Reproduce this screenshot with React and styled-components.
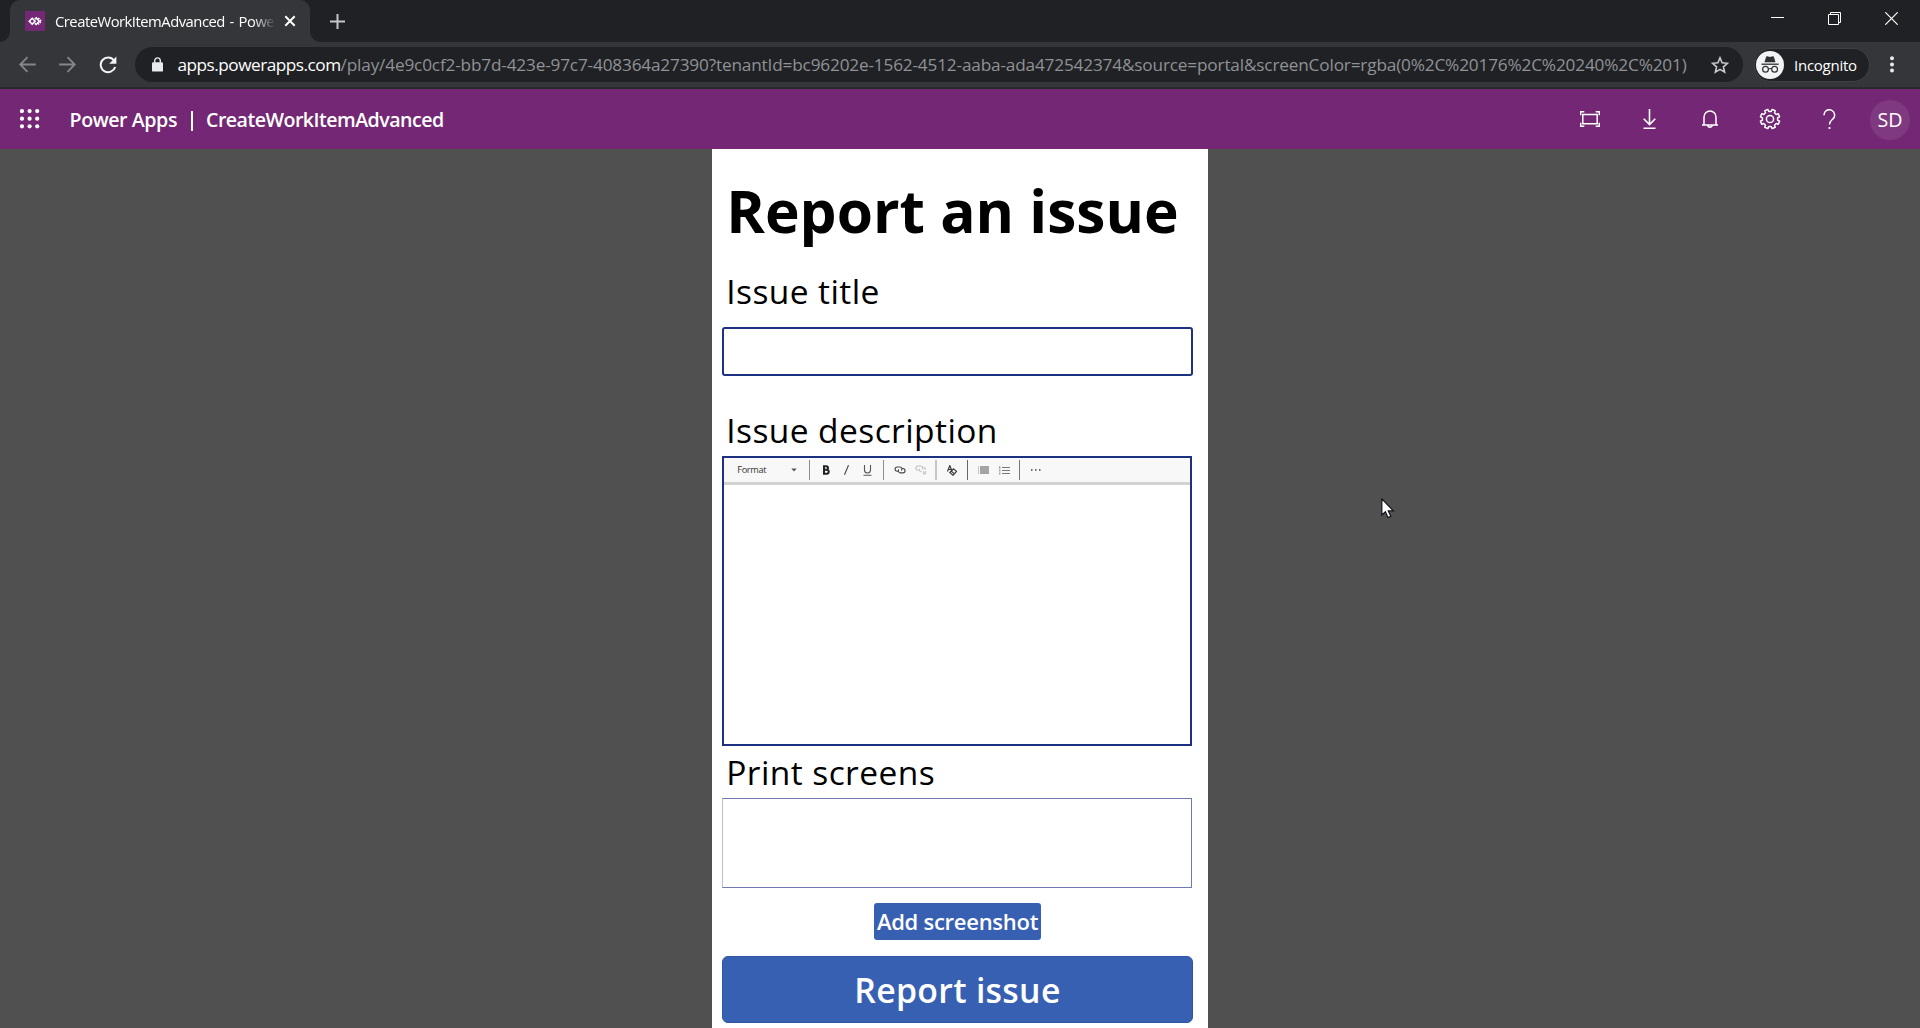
import React from "react";
import styled, { createGlobalStyle } from "styled-components";

const Global = createGlobalStyle`
  * { box-sizing: border-box; }
  html, body { margin: 0; padding: 0; background: #505050; overflow: hidden; }
  svg { display: block; flex: none; }
  button, input { font: inherit; }
`;

const UI_FONT = `"Open Sans", "Noto Sans", sans-serif`;

const Window = styled.div`
  width: 1920px;
  height: 1028px;
  display: flex;
  flex-direction: column;
  overflow: hidden;
  font-family: ${UI_FONT};
  background: #505050;
`;

const Text = styled.span`
  white-space: nowrap;
  font-size: ${(p) => p.$size}px;
  font-weight: ${(p) => p.$weight || 400};
  letter-spacing: ${(p) => p.$track || 0}px;
  word-spacing: ${(p) => p.$words || 0}px;
  color: ${(p) => p.$color || "#fff"};
  line-height: 1.36;
  padding-top: ${(p) => p.$drop || 0}px;
`;

/* ---------- browser chrome ---------- */

const TabStrip = styled.div`
  height: 42px;
  flex: none;
  display: flex;
  background: #202124;
  padding-left: 10px;
`;

const Tab = styled.div`
  position: relative;
  width: 300px;
  height: 42px;
  border-radius: 10px 10px 0 0;
  background: #35363a;
  display: flex;
  align-items: center;
  padding-left: 15px;
  &::before, &::after {
    content: "";
    position: absolute;
    bottom: 0;
    width: 10px;
    height: 10px;
  }
  &::before {
    left: -10px;
    background: radial-gradient(circle at 0 0, transparent 9.5px, #35363a 10px);
  }
  &::after {
    right: -10px;
    background: radial-gradient(circle at 100% 0, transparent 9.5px, #35363a 10px);
  }
`;

const TabTitle = styled.div`
  width: 220px;
  margin: 0 9px 0 10px;
  display: flex;
  mask-image: linear-gradient(90deg, #000 198px, transparent 221px);
`;

const NewTab = styled.div`
  margin-left: 20px;
  display: flex;
  align-items: center;
`;

const WindowButtons = styled.div`
  margin-left: auto;
  display: flex;
  height: 37px;
`;

const WindowButton = styled.div`
  width: ${(p) => p.$w || 57}px;
  display: flex;
  align-items: center;
  justify-content: center;
`;

const AddressRow = styled.div`
  height: 47px;
  flex: none;
  display: flex;
  align-items: flex-start;
  padding: 5px 0 0 8px;
  background: #35363a;
  border-bottom: 2px solid #28292c;
`;

const NavButton = styled.div`
  width: 40px;
  height: 35px;
  display: flex;
  align-items: center;
  justify-content: center;
`;

const Omnibox = styled.div`
  width: 1608px;
  height: 35px;
  margin-left: 7px;
  border-radius: 18px;
  background: #202124;
  display: flex;
  align-items: center;
  padding: 0 14px 0 17px;
`;

const Url = styled.div`
  display: flex;
  margin-left: 14.5px;
  flex: 1;
`;

const Incognito = styled.div`
  width: 116px;
  height: 34px;
  margin: 1px 0 0 10.5px;
  border-radius: 17px;
  border: 1px solid #3f4043;
  background: #202124;
  display: flex;
  align-items: center;
  padding-left: 1.5px;
  gap: 10px;
`;

const MenuButton = styled.div`
  width: 45.5px;
  height: 35px;
  display: flex;
  align-items: center;
  justify-content: center;
`;

/* ---------- app header ---------- */

const Header = styled.header`
  height: 60px;
  flex: none;
  display: flex;
  align-items: center;
  background: #742774;
  padding-left: 20px;
`;

const Brand = styled.div`
  display: flex;
  align-items: center;
  margin-left: 29.5px;
  padding-top: 2px;
`;

const Divider = styled.div`
  width: 2px;
  height: 20px;
  margin: 2px 13px 0 14px;
  background: #fff;
`;

const HeaderActions = styled.div`
  margin-left: auto;
  display: flex;
`;

const HeaderAction = styled.div`
  width: 60px;
  height: 60px;
  display: flex;
  align-items: center;
  justify-content: center;
`;

const Avatar = styled.div`
  width: 40px;
  height: 40px;
  margin-top: 2px;
  border-radius: 50%;
  background: #7f397f;
  display: flex;
  align-items: center;
  justify-content: center;
`;

/* ---------- form ---------- */

const Stage = styled.main`
  flex: 1;
  display: flex;
  justify-content: center;
`;

const Phone = styled.section`
  width: 496.5px;
  height: 879px;
  padding: 0 15.5px 0 10.5px;
  background: #fff;
  display: flex;
  flex-direction: column;
`;

const Title = styled.h1`
  margin: 0;
  height: 116px;
  padding: 21px 0 0 4px;
  font-size: 58.6px;
  font-weight: 700;
  line-height: 80px;
  white-space: nowrap;
  color: #000;
`;

const Label = styled.label`
  height: ${(p) => p.$height}px;
  padding: ${(p) => p.$top}px 0 0 4px;
  font-size: 33.5px;
  font-weight: 400;
  line-height: 46px;
  letter-spacing: 0.42px;
  color: #000;
  white-space: nowrap;
`;

const TitleInput = styled.input`
  display: block;
  width: 470.5px;
  height: 49px;
  margin: 0;
  border: 2px solid #1e3180;
  border-radius: 3px;
  background: #fff;
  outline: none;
`;

const Editor = styled.div`
  width: 470px;
  height: 290px;
  border: 2px solid #1e3180;
  background: #fff;
`;

const EditorBar = styled.div`
  height: 27px;
  background: #f8f8f8;
  border-bottom: 3px solid #d2d2d2;
  display: flex;
  align-items: center;
  padding-left: 13px;
`;

const Separator = styled.div`
  width: ${(p) => p.$w || 1}px;
  height: 20px;
  background: ${(p) => p.$color || "#8c8c8c"};
`;

const Tool = styled.div`
  width: ${(p) => p.$w}px;
  height: 22px;
  display: flex;
  align-items: center;
  justify-content: center;
`;

const FormatPicker = styled.div`
  width: 72px;
  display: flex;
  align-items: center;
  justify-content: space-between;
  padding-right: 12px;
`;

const Screens = styled.div`
  width: 470px;
  height: 90px;
  border: 1px solid #6f7ab2;
  border-left-color: #b9bedb;
`;

const Button = styled.button`
  width: ${(p) => p.$w}px;
  height: ${(p) => p.$h}px;
  margin: ${(p) => p.$top}px 0 0;
  padding: 0;
  align-self: ${(p) => (p.$center ? "center" : "flex-start")};
  border: ${(p) => (p.$center ? "none" : "1px solid #2d55a3")};
  border-radius: ${(p) => (p.$center ? 3 : 6)}px;
  background: #3860b2;
  display: flex;
  align-items: center;
  justify-content: center;
`;

const Cursor = styled.svg`
  position: absolute;
  left: 1381px;
  top: 497.5px;
`;

const dots = [0, 1, 2];

function EditorToolbar() {
  return (
    <EditorBar>
      <FormatPicker>
        <Text $size={9.2} $track={-0.35} $color="#333" $drop={1}>Format</Text>
        <svg width="6" height="4" viewBox="0 0 6 4"><path d="M.3 .5h5.4L3 3.5z" fill="#555" /></svg>
      </FormatPicker>
      <Separator />
      <Tool $w={31}>
        <svg width="8" height="10" viewBox="0 0 8 10" fill="none" stroke="#222" strokeWidth="2">
          <path d="M2 1.2h2.2a1.8 1.8 0 0 1 0 3.6H2zM2 4.8h2.7a2 2 0 0 1 0 4H2zM2 .5v9" />
        </svg>
      </Tool>
      <Tool $w={11}>
        <svg width="5" height="10" viewBox="0 0 5 10" stroke="#444" strokeWidth="1.1"><path d="M4.5 .3L.5 9.7" /></svg>
      </Tool>
      <Tool $w={31}>
        <svg width="9" height="11" viewBox="0 0 9 11" fill="none" stroke="#555" strokeWidth="1.1">
          <path d="M1.5 0v5a3 3 0 0 0 6 0V0M.5 10.3h8" />
        </svg>
      </Tool>
      <Separator />
      <Tool $w={31}>
        <svg width="12" height="8" viewBox="0 0 12 8" fill="none" stroke="#444" strokeWidth="1.1">
          <path d="M4 5.2H3.2A2.1 2.1 0 0 1 3.2 1h2.6a2.1 2.1 0 0 1 1.5 3.6" />
          <path d="M8 2.5h.8a2.2 2.2 0 0 1 0 4.4H6.5A2.2 2.2 0 0 1 4.8 3.3" />
        </svg>
      </Tool>
      <Tool $w={11}>
        <svg width="12" height="10" viewBox="0 0 12 10" fill="none" stroke="#c2c2c2" strokeWidth="1.1">
          <path d="M3.8 5.2H3A2.1 2.1 0 0 1 3 1h2.6a2.1 2.1 0 0 1 1.5 3.6" />
          <path d="M7.5 2.5h.8a2.2 2.2 0 0 1 2.2 2.2M6.5 6.9a2.2 2.2 0 0 1-1.9-3.2M8 6.3l3 3M11 6.3l-3 3" />
        </svg>
      </Tool>
      <Tool $w={9} />
      <Separator $w={2} $color="#c6c6c6" />
      <Tool $w={30}>
        <svg width="10" height="11" viewBox="0 0 10 11" fill="none" stroke="#333" strokeWidth="1.1">
          <path d="M.5 6.5L2.8 .5l2 5M1.3 4.5h2.8" />
          <path d="M6.5 3.8L9.5 6.4 6 10.3 2.8 7.5zM4.2 6l3.2 2.8" />
        </svg>
      </Tool>
      <Separator $color="#666" />
      <Tool $w={31}>
        <svg width="11" height="8" viewBox="0 0 11 8">
          <path d="M2 1h9M2 3h9M2 5h9M2 7h9" stroke="#888" strokeWidth="1.3" />
          <path d="M0 1h1M0 3h1M0 5h1M0 7h1" stroke="#999" />
        </svg>
      </Tool>
      <Tool $w={11}>
        <svg width="11" height="9" viewBox="0 0 11 9" stroke="#777" strokeWidth="1">
          <path d="M3 1.5h8M3 4.5h8M3 7.5h8M.8 .3v2.4M.8 3.5v2M.8 6.5v2" />
        </svg>
      </Tool>
      <Tool $w={9} />
      <Separator $color="#777" />
      <Tool $w={31}>
        <svg width="10" height="2" viewBox="0 0 10 2" fill="#444">
          {dots.map((i) => <rect key={i} x={i * 4} y="0.2" width="1.5" height="1.5" />)}
        </svg>
      </Tool>
    </EditorBar>
  );
}

function Chrome() {
  return (
    <>
      <TabStrip>
        <Tab>
          <svg width="20" height="20" viewBox="0 0 20 20">
            <rect width="20" height="20" fill="#742774" />
            <g fill="none" stroke="#fff" strokeWidth="1.6">
              <path d="M7.2 7.3L10.1 10.2 7.2 13.1 4.3 10.2z" />
              <path d="M9.8 8.1L11.2 6.9 14.2 10.2 11.2 13.5 9.8 12.3" />
              <path d="M13.2 7L16.2 10.2 13.2 13.4" strokeDasharray="1.7 .8" />
            </g>
          </svg>
          <TabTitle><Text $size={14.8} $track={-0.5} $words={1.4}>CreateWorkItemAdvanced - Powe</Text></TabTitle>
          <svg width="12" height="12" viewBox="0 0 12 12" stroke="#fff" strokeWidth="2"><path d="M1.3 1.3l9.4 9.4M10.7 1.3l-9.4 9.4" /></svg>
        </Tab>
        <NewTab>
          <svg width="15" height="15" viewBox="0 0 15 15" stroke="#c4c7ca" strokeWidth="2"><path d="M7.5 0v15M0 7.5h15" /></svg>
        </NewTab>
        <WindowButtons>
          <WindowButton>
            <svg width="13" height="13" viewBox="0 0 13 13"><path d="M0 5.5h13" stroke="#fff" /></svg>
          </WindowButton>
          <WindowButton $w={56}>
            <svg width="13" height="13" viewBox="0 0 13 13" fill="none" stroke="#fff"><path d="M.5 2.5h10v10H.5zM2.5 2.5v-2h10v10h-2" /></svg>
          </WindowButton>
          <WindowButton $w={58}>
            <svg width="13" height="13" viewBox="0 0 13 13" stroke="#fff" strokeWidth="1.2"><path d="M.3 .3l12.4 12.4M12.7 .3L.3 12.7" /></svg>
          </WindowButton>
        </WindowButtons>
      </TabStrip>
      <AddressRow>
        <NavButton>
          <svg width="18" height="17" viewBox="0 0 18 17" fill="none" stroke="#85868a" strokeWidth="1.8"><path d="M16.8 8.5H1.5M8.5 1.2L1.2 8.5l7.3 7.3" /></svg>
        </NavButton>
        <NavButton>
          <svg width="18" height="17" viewBox="0 0 18 17" fill="none" stroke="#85868a" strokeWidth="1.8"><path d="M.2 8.5H15.5M8.5 1.2l7.3 7.3-7.3 7.3" /></svg>
        </NavButton>
        <NavButton>
          <svg width="18" height="18" viewBox="0 0 18 18">
            <path d="M15 4.3A7.4 7.4 0 1 0 16.2 11" fill="none" stroke="#f1f3f4" strokeWidth="2" />
            <path d="M17.4 .6v7.2h-7.2z" fill="#f1f3f4" />
          </svg>
        </NavButton>
        <Omnibox>
          <svg width="11" height="15" viewBox="0 0 11 15">
            <rect y="5.2" width="11" height="9.4" rx="1.2" fill="#e8eaed" />
            <path d="M2.7 5.8V3.7a2.8 2.8 0 0 1 5.6 0v2.1" fill="none" stroke="#e8eaed" strokeWidth="1.4" />
          </svg>
          <Url>
            <Text $size={17.2} $track={-0.49}>apps.powerapps.com</Text>
            <Text $size={17.2} $track={-0.16} $color="#8f9296">/play/4e9c0cf2-bb7d-423e-97c7-408364a27390?tenantId=bc96202e-1562-4512-aaba-ada472542374&amp;source=portal&amp;screenColor=rgba(0%2C%20176%2C%20240%2C%201)</Text>
          </Url>
          <svg width="18" height="18" viewBox="0 0 18 18" fill="none" stroke="#c8cacd" strokeWidth="1.6">
            <path d="M9 1.8l2.1 5 5.4.5-4.1 3.6 1.2 5.3L9 13.4l-4.6 2.8 1.2-5.3L1.5 7.3l5.4-.5z" />
          </svg>
        </Omnibox>
        <Incognito>
          <svg width="28" height="28" viewBox="0 0 28 28">
            <circle cx="14" cy="14" r="14" fill="#f1f3f4" />
            <path d="M8.5 11.2l1.6-5.4q.3-.7 1.2-.5l2.7.7 2.7-.7q.9-.2 1.2.5l1.6 5.4z" fill="#303134" />
            <path d="M5.5 13.2h17.2" stroke="#303134" strokeWidth="1.3" />
            <g fill="none" stroke="#303134" strokeWidth="1.2">
              <circle cx="9.5" cy="18.3" r="2.9" /><circle cx="18.6" cy="18.3" r="2.9" />
              <path d="M12.4 18q1.6-1 3.3 0" />
            </g>
          </svg>
          <Text $size={15} $track={-0.25}>Incognito</Text>
        </Incognito>
        <MenuButton>
          <svg width="4" height="17" viewBox="0 0 4 17" fill="#e8eaed">
            {dots.map((i) => <circle key={i} cx="2" cy={2.2 + i * 6.2} r="2" />)}
          </svg>
        </MenuButton>
      </AddressRow>
    </>
  );
}

function AppHeader() {
  const s = { fill: "none", stroke: "#fff", strokeWidth: 1.5 };
  return (
    <Header>
      <svg width="20" height="20" viewBox="0 0 20 20" fill="#fff">
        {dots.map((r) => dots.map((c) => <circle key={`${r}${c}`} cx={2 + c * 7.6} cy={2.1 + r * 7.6} r="2.1" />))}
      </svg>
      <Brand>
        <Text $size={19.6} $weight={600} $track={-0.42}>Power Apps</Text>
        <Divider />
        <Text $size={19.6} $weight={600} $track={-0.52}>CreateWorkItemAdvanced</Text>
      </Brand>
      <HeaderActions>
        <HeaderAction>
          <svg width="20" height="18" viewBox="0 0 20 18" {...s}>
            <path d="M2.8 4.5h14.4v9.2H2.8z" />
            <path d="M.7 5.3V1.8H4.3M15.7 1.8h3.6v3.5M19.3 12.8v3.5h-3.6M4.3 16.3H.7v-3.5" />
          </svg>
        </HeaderAction>
        <HeaderAction>
          <svg width="14" height="20" viewBox="0 0 14 20" {...s}><path d="M6.5 0v15.5M.7 9.7l5.8 5.8 5.8-5.8M.5 19.2h12" strokeWidth="1.6" /></svg>
        </HeaderAction>
        <HeaderAction>
          <svg width="18" height="20" viewBox="0 0 18 20" {...s}>
            <path d="M1 16h16M3 16V8a6 6 0 0 1 12 0v8" />
            <path d="M6.8 16a2.2 2.2 0 0 0 4.4 0" />
          </svg>
        </HeaderAction>
        <HeaderAction>
          <svg width="22" height="22" viewBox="0 0 22 22" {...s} strokeLinejoin="round">
            <circle cx="11" cy="11" r="3.6" />
            <path d={gearPath(11, 11, 7.7, 9.8, 8)} />
          </svg>
        </HeaderAction>
        <HeaderAction>
          <svg width="14" height="20" viewBox="0 0 14 20" {...s}>
            <path d="M1 6.2a5.3 5.3 0 1 1 8.9 3.7C8 11.6 6.5 12.5 6.5 15.5" />
            <path d="M6.5 18v2" strokeWidth="1.8" />
          </svg>
        </HeaderAction>
        <HeaderAction><Avatar><Text $size={19.6} $drop={1}>SD</Text></Avatar></HeaderAction>
      </HeaderActions>
    </Header>
  );
}

function gearPath(cx, cy, inner, outer, teeth) {
  const pts = [];
  const step = (Math.PI * 2) / teeth;
  for (let i = 0; i < teeth; i += 1) {
    const a = i * step + step / 2;
    [[-0.3, inner], [-0.21, outer], [0.21, outer], [0.3, inner]].forEach(([o, r]) => {
      const t = a + o * step;
      pts.push(`${(cx + r * Math.cos(t)).toFixed(2)} ${(cy + r * Math.sin(t)).toFixed(2)}`);
    });
  }
  return `M${pts.join("L")}Z`;
}

export default function App() {
  return (
    <Window>
      <Global />
      <Chrome />
      <AppHeader />
      <Stage>
        <Phone>
          <Title>Report an issue</Title>
          <Label $height={62} $top={3}>Issue title</Label>
          <TitleInput />
          <Label $height={80} $top={31}>Issue description</Label>
          <Editor><EditorToolbar /></Editor>
          <Label $height={52} $top={3}>Print screens</Label>
          <Screens />
          <Button $w={167.5} $h={37} $top={15} $center><Text $size={22} $weight={600} $track={-0.27}>Add screenshot</Text></Button>
          <Button $w={470.5} $h={67.5} $top={15.5}><Text $size={33.8} $weight={600} $track={0.3} $drop={3}>Report issue</Text></Button>
        </Phone>
      </Stage>
      <Cursor width="14.5" height="21" viewBox="0 0 13 19">
        <path d="M.7 .8v14.6l3.2-2.9 2.3 5.2 2.6-1.1-2.3-5h4.6z" fill="#fff" stroke="#14141f" strokeWidth="1.1" />
      </Cursor>
    </Window>
  );
}
